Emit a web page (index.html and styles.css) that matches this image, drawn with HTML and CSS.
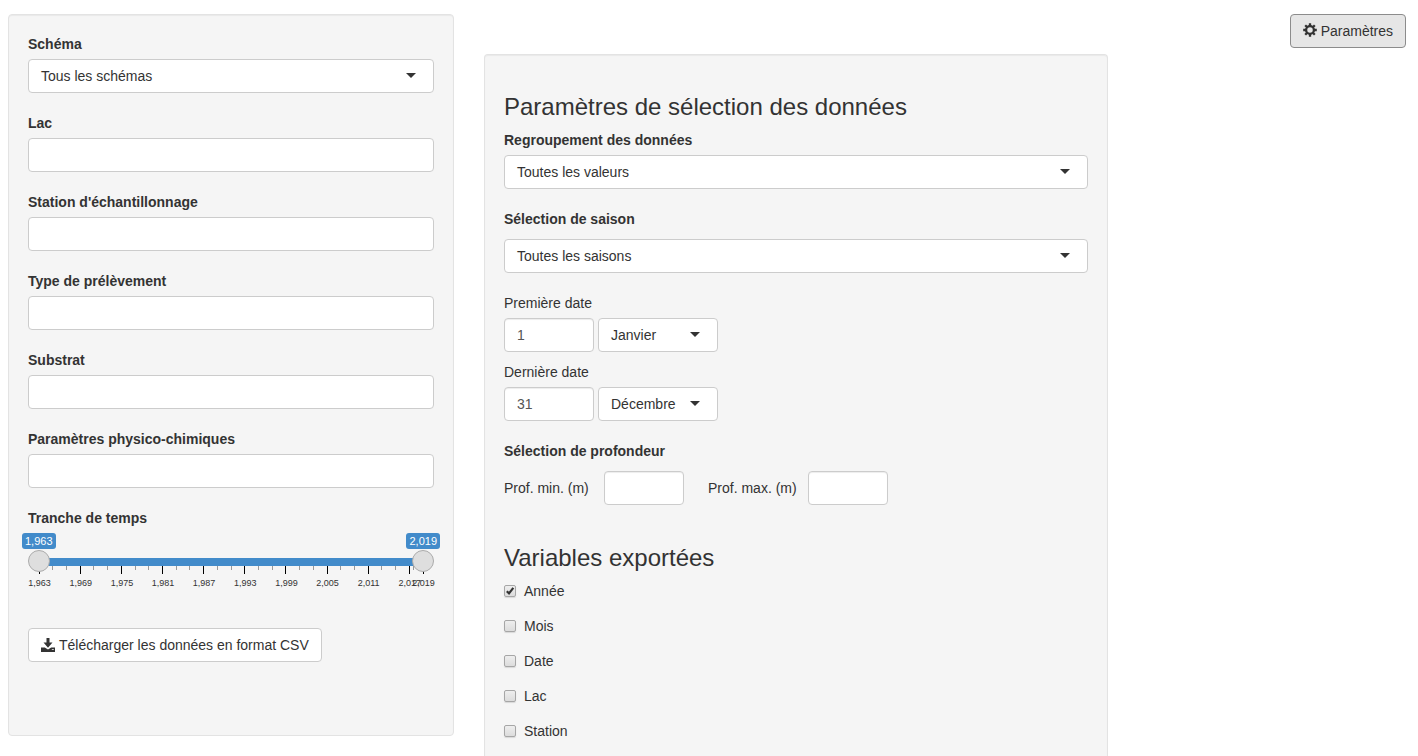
FILE: index.html
```html
<!DOCTYPE html>
<html lang="fr">
<head>
<meta charset="utf-8">
<title>Données des lacs</title>
<link rel="stylesheet" href="styles.css">
</head>
<body>
<div class="layout">
  <form class="well sidebar">
    <div class="field"><label class="label">Schéma</label><div class="select">Tous les schémas</div></div>
    <div class="field"><label class="label">Lac</label><div class="box"></div></div>
    <div class="field"><label class="label">Station d'échantillonnage</label><div class="box"></div></div>
    <div class="field"><label class="label">Type de prélèvement</label><div class="box"></div></div>
    <div class="field"><label class="label">Substrat</label><div class="box"></div></div>
    <div class="field"><label class="label">Paramètres physico-chimiques</label><div class="box"></div></div>
    <div class="field slider-field">
      <label class="label">Tranche de temps</label>
      <div class="slider">
        <div class="slider-values"><span class="value">1,963</span><span class="value">2,019</span></div>
        <svg class="track" width="406" height="42" viewBox="0 0 406 42">
          <rect class="bar" x="11" y="9" width="384" height="8"/>
          <path class="minor" d="M24.5 17v4M38.5 17v4M65.5 17v4M79.5 17v4M107.5 17v4M120.5 17v4M148.5 17v4M161.5 17v4M189.5 17v4M203.5 17v4M230.5 17v4M244.5 17v4M271.5 17v4M285.5 17v4M312.5 17v4M326.5 17v4M353.5 17v4M367.5 17v4M385.5 17v4"/>
          <path class="major" d="M11.5 17v8M52.5 17v8M93.5 17v8M134.5 17v8M175.5 17v8M216.5 17v8M257.5 17v8M299.5 17v8M340.5 17v8M381.5 17v8M395.5 17v8"/>
          <g class="years">
            <text x="11.5" y="37">1,963</text><text x="52.7" y="37">1,969</text><text x="93.9" y="37">1,975</text><text x="135" y="37">1,981</text><text x="176.1" y="37">1,987</text><text x="217.3" y="37">1,993</text><text x="258.4" y="37">1,999</text><text x="299.5" y="37">2,005</text><text x="340.6" y="37">2,011</text><text x="381.8" y="37">2,017</text><text x="395.5" y="37">2,019</text>
          </g>
          <circle class="handle" cx="11" cy="12" r="10.5"/>
          <circle class="handle" cx="395" cy="12" r="10.5"/>
        </svg>
      </div>
    </div>
    <button class="btn" type="button"><svg class="icon" width="14" height="14" viewBox="0 0 14 14"><path d="M5.500 0h3v4.500h3L7 9.800 2.500 4.500h3zM0 9.400h3.800L7 11.600l3.200-2.200H14V14H0zM10.800 11.200v.9h2v-.9z" fill-rule="evenodd"/></svg>Télécharger les données en format CSV</button>
  </form>

  <main class="well settings">
    <h3 class="title">Paramètres de sélection des données</h3>
    <div class="field"><label class="label">Regroupement des données</label><div class="select">Toutes les valeurs</div></div>
    <div class="field season"><label class="label">Sélection de saison</label><div class="select">Toutes les saisons</div></div>
    <div class="date-group"><div class="caption">Première date</div><div class="date-row"><div class="input day">1</div><div class="select month">Janvier</div></div></div>
    <div class="date-group"><div class="caption">Dernière date</div><div class="date-row"><div class="input day">31</div><div class="select month">Décembre</div></div></div>
    <div class="depth">
      <label class="label">Sélection de profondeur</label>
      <div class="depth-row"><span class="depth-label">Prof. min. (m)</span><div class="input depth-input"></div><span class="depth-label second">Prof. max. (m)</span><div class="input depth-input"></div></div>
    </div>
    <h3 class="title export">Variables exportées</h3>
    <div class="checks">
      <label class="check"><span class="tick"><svg width="10" height="10" viewBox="0 0 10 10"><path d="M1.800 5.300 4 7.400 8.300 1.900"/></svg></span>Année</label>
      <label class="check"><span class="tick"></span>Mois</label>
      <label class="check"><span class="tick"></span>Date</label>
      <label class="check"><span class="tick"></span>Lac</label>
      <label class="check"><span class="tick"></span>Station</label>
    </div>
  </main>

  <button class="btn active" type="button"><svg class="icon cog" width="14" height="14" viewBox="0 0 14 14"><circle cx="7" cy="7" r="3.900"/><path d="M7 .2v3M7 10.800v3M.2 7h3M10.800 7h3M2.200 2.200l2 2M9.800 9.800l2 2M11.800 2.200l-2 2M4.200 9.800l-2 2"/></svg>Paramètres</button>
</div>
</body>
</html>
```
FILE: styles.css
```css
* { box-sizing: border-box; }
html { overflow: hidden; }
body {
  margin: 0;
  height: 756px;
  overflow: hidden;
  background: #fff;
  color: #333;
  font: 14px/20px "Liberation Sans", Arial, sans-serif;
}
.layout {
  display: flex;
  align-items: flex-start;
  height: 756px;
  padding: 14px 12px 0 8px;
}
.well {
  padding: 19px;
  border: 1px solid #e3e3e3;
  border-radius: 4px;
  background: #f5f5f5;
  box-shadow: inset 0 1px 1px rgba(0, 0, 0, .05);
}
.sidebar { width: 446px; height: 722px; }
.settings {
  width: 624px;
  height: 702px;
  margin: 40px auto 0 30px;
  border-bottom: 0;
  border-radius: 4px 4px 0 0;
  padding-bottom: 0;
}
.field { margin-bottom: 20px; }
.label { display: block; margin-bottom: 5px; font-weight: bold; }
.select, .box, .input {
  height: 34px;
  padding: 6px 12px;
  border: 1px solid #ccc;
  border-radius: 4px;
  background: #fff;
}
.select {
  display: flex;
  align-items: center;
  justify-content: space-between;
  padding-right: 17px;
}
.select::after {
  content: "";
  margin-bottom: 1px;
  border: 5px solid transparent;
  border-top-color: #333;
  border-bottom-width: 0;
}
.input { color: #555; box-shadow: inset 0 1px 1px rgba(0, 0, 0, .075); }

.slider-field { margin-bottom: 36px; }
.slider { height: 59px; }
.slider-values { display: flex; justify-content: space-between; margin: 0 -6px; }
.value {
  height: 16px;
  padding: 1px 3px;
  border-radius: 3px;
  background: #428bca;
  color: #fff;
  font-size: 11px;
  line-height: 14px;
}
.track { display: block; overflow: visible; }
.bar { fill: #428bca; }
.minor { stroke: #999; }
.major { stroke: #000; }
.years { fill: #333; font-size: 9px; text-anchor: middle; }
.handle { fill: #dedede; stroke: #ababab; }

.btn {
  display: flex;
  align-items: center;
  gap: 4px;
  height: 34px;
  padding: 6px 12px;
  border: 1px solid #ccc;
  border-radius: 4px;
  background: #fff;
  color: #333;
  font: inherit;
  white-space: nowrap;
}
.btn.active { border-color: #8c8c8c; background: #e6e6e6; }
.icon { flex: none; fill: #333; }
.cog { margin-bottom: 2px; fill: none; stroke: #333; stroke-width: 2.3; }

.title { margin: 20px 0 10px; font-size: 24px; font-weight: 500; line-height: 26px; }
.season .label { margin-bottom: 10px; }
.caption { margin-bottom: 5px; }
.date-group { margin-bottom: 10px; }
.date-row { display: flex; gap: 4px; }
.day { width: 90px; }
.month { width: 120px; }
.depth { margin-top: 20px; }
.depth .label { margin-bottom: 10px; }
.depth-row { display: flex; align-items: center; }
.depth-label { width: 100px; }
.second { margin-left: 24px; }
.depth-input { width: 80px; }
.export { margin-top: 40px; }
.checks { display: grid; gap: 15px; }
.check { display: flex; align-items: center; gap: 8px; }
.tick {
  display: grid;
  place-items: center;
  width: 12px;
  height: 12px;
  border: 1px solid #a6a6a6;
  border-radius: 2px;
  background: linear-gradient(#eee, #dcdcdc);
  box-shadow: 0 1px 1px rgba(0, 0, 0, .12);
}
.tick svg { fill: none; stroke: #333; stroke-width: 2.2; }
```
